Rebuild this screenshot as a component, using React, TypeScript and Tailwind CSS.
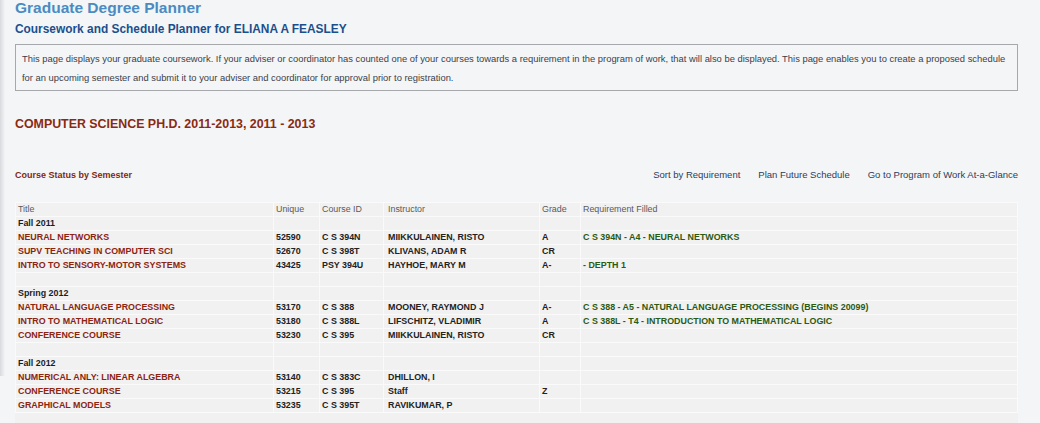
import React from "react";

type Row =
  | { kind: "sem"; label: string }
  | { kind: "blank" }
  | { kind: "course"; title: string; unique: string; id: string; instr: string; grade: string; req: string };

const rows: Row[] = [
  { kind: "sem", label: "Fall 2011" },
  { kind: "course", title: "NEURAL NETWORKS", unique: "52590", id: "C S 394N", instr: "MIIKKULAINEN, RISTO", grade: "A", req: "C S 394N - A4 - NEURAL NETWORKS" },
  { kind: "course", title: "SUPV TEACHING IN COMPUTER SCI", unique: "52670", id: "C S 398T", instr: "KLIVANS, ADAM R", grade: "CR", req: "" },
  { kind: "course", title: "INTRO TO SENSORY-MOTOR SYSTEMS", unique: "43425", id: "PSY 394U", instr: "HAYHOE, MARY M", grade: "A-", req: "- DEPTH 1" },
  { kind: "blank" },
  { kind: "sem", label: "Spring 2012" },
  { kind: "course", title: "NATURAL LANGUAGE PROCESSING", unique: "53170", id: "C S 388", instr: "MOONEY, RAYMOND J", grade: "A-", req: "C S 388 - A5 - NATURAL LANGUAGE PROCESSING (BEGINS 20099)" },
  { kind: "course", title: "INTRO TO MATHEMATICAL LOGIC", unique: "53180", id: "C S 388L", instr: "LIFSCHITZ, VLADIMIR", grade: "A", req: "C S 388L - T4 - INTRODUCTION TO MATHEMATICAL LOGIC" },
  { kind: "course", title: "CONFERENCE COURSE", unique: "53230", id: "C S 395", instr: "MIIKKULAINEN, RISTO", grade: "CR", req: "" },
  { kind: "blank" },
  { kind: "sem", label: "Fall 2012" },
  { kind: "course", title: "NUMERICAL ANLY: LINEAR ALGEBRA", unique: "53140", id: "C S 383C", instr: "DHILLON, I", grade: "", req: "" },
  { kind: "course", title: "CONFERENCE COURSE", unique: "53215", id: "C S 395", instr: "Staff", grade: "Z", req: "" },
  { kind: "course", title: "GRAPHICAL MODELS", unique: "53235", id: "C S 395T", instr: "RAVIKUMAR, P", grade: "", req: "" },
];

const cell = "h-[14px] border border-[#fafafa] px-[2px] py-0 align-middle whitespace-nowrap leading-[13px]";

function EmptyCells() {
  return (
    <>
      <td className={cell}></td>
      <td className={cell}></td>
      <td className={cell}></td>
      <td className={cell}></td>
      <td className={cell}></td>
    </>
  );
}

export default function App() {
  return (
    <div className="relative min-h-[423px] bg-[#f4f5f7] pl-[15px] pr-[22px] pt-0 text-[#222]" style={{ fontFamily: '"Liberation Sans", Arial, sans-serif' }}>
      <div className="absolute left-0 top-0 h-[378px] w-[5px] bg-gradient-to-r from-[#d8d9dc] to-[#f4f5f7]" />
      <h1 className="mt-[-2px] text-[15.5px] font-bold leading-[20px] text-[#4a8bc2]">Graduate Degree Planner</h1>
      <h2 className="mt-[3px] text-[11.9px] font-bold leading-[16px] text-[#1b4f8c]">Coursework and Schedule Planner for ELIANA A FEASLEY</h2>
      <div className="mt-[7px] border border-[#a6a8ab] px-[6px] pt-[4px] pb-[3px] text-[9.4px] leading-[19px] text-[#3a3f4a]">
        This page displays your graduate coursework. If your adviser or coordinator has counted one of your courses towards a requirement in the program of work, that will also be displayed. This page enables you to create a proposed schedule for an upcoming semester and submit it to your adviser and coordinator for approval prior to registration.
      </div>
      <div className="mt-[25px] text-[12.4px] font-bold leading-[16px] text-[#8a2a10]">COMPUTER SCIENCE PH.D. 2011-2013, 2011 - 2013</div>
      <div className="mt-[37px] flex items-center justify-between text-[9.5px] leading-[12px]">
        <span className="text-[9px] font-bold text-[#7e2a12]">Course Status by Semester</span>
        <div className="flex gap-[18px] text-[#2c3c5c]">
          <span>Sort by Requirement</span>
          <span>Plan Future Schedule</span>
          <span>Go to Program of Work At-a-Glance</span>
        </div>
      </div>
      <div className="mt-[21px] bg-[#f1f1f1] pb-[12px]">
        <table className="w-full border-collapse text-[8.9px]">
          <colgroup>
            <col className="w-[258px]" />
            <col className="w-[46px]" />
            <col className="w-[64px]" />
            <col className="w-[156px]" />
            <col className="w-[41px]" />
            <col />
          </colgroup>
          <thead>
            <tr className="text-[#5a5a5a]">
              <td className={cell}>Title</td>
              <td className={cell}>Unique</td>
              <td className={cell}>Course ID</td>
              <td className={cell + " pl-[4px]"}>Instructor</td>
              <td className={cell}>Grade</td>
              <td className={cell}>Requirement Filled</td>
            </tr>
          </thead>
          <tbody className="font-bold">
            {rows.map((r, i) => {
              if (r.kind === "sem")
                return (
                  <tr key={i}>
                    <td className={cell + " text-[#1c1c2a]"}>{r.label}</td>
                    <EmptyCells />
                  </tr>
                );
              if (r.kind === "blank")
                return (
                  <tr key={i}>
                    <td className={cell}></td>
                    <EmptyCells />
                  </tr>
                );
              return (
                <tr key={i}>
                  <td className={cell + " text-[#8b2410]"}>{r.title}</td>
                  <td className={cell}>{r.unique}</td>
                  <td className={cell}>{r.id}</td>
                  <td className={cell + " pl-[4px]"}>{r.instr}</td>
                  <td className={cell}>{r.grade}</td>
                  <td className={cell + " text-[#2b5a12]"}>{r.req}</td>
                </tr>
              );
            })}
          </tbody>
        </table>
      </div>
    </div>
  );
}
